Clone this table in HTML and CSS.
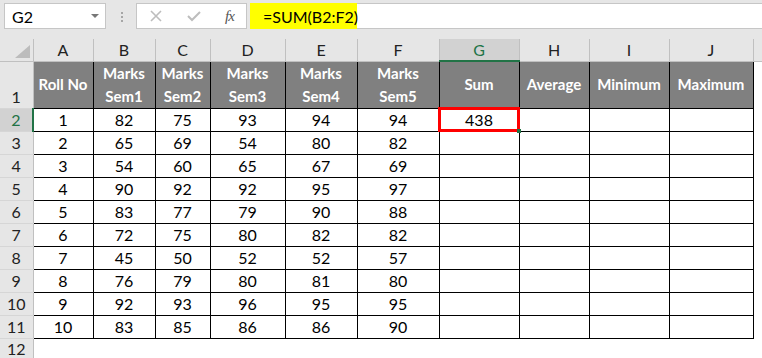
FILE: index.html
```html
<!DOCTYPE html>
<html lang="en">
<head>
  <meta charset="UTF-8">
  <title>Sum of marks</title>
  <link rel="stylesheet" href="styles.css">
</head>
<body>
  <div class="toolbar">
    <div class="name-box">
      <span>G2</span>
      <span class="caret"></span>
    </div>
    <div class="grip"><i></i><i></i><i></i></div>
    <div class="fx-buttons">
      <svg width="14" height="14" viewBox="0 0 14 14"><path d="M2 2 L12 12 M12 2 L2 12" stroke="#bdbdbd" stroke-width="1.6" fill="none"/></svg>
      <svg width="16" height="14" viewBox="0 0 16 14"><path d="M2 7 L6 11 L14 3" stroke="#bdbdbd" stroke-width="2" fill="none"/></svg>
      <span class="fx">fx</span>
    </div>
    <div class="formula">
      <span class="formula-text">=SUM(B2:F2)</span>
    </div>
  </div>

  <table class="sheet">
    <colgroup>
      <col style="width:33px">
      <col style="width:60px">
      <col style="width:62px">
      <col style="width:55px">
      <col style="width:75px">
      <col style="width:72px">
      <col style="width:82px">
      <col style="width:80px">
      <col style="width:70px">
      <col style="width:80px">
      <col style="width:84px">
      <col style="width:9px">
    </colgroup>
    <tr class="col-head">
      <th class="corner"><span class="tri"></span></th>
      <th>A</th><th>B</th><th>C</th><th>D</th><th>E</th><th>F</th>
      <th class="sel">G</th><th>H</th><th>I</th><th>J</th><th></th>
    </tr>
    <tr class="title-row">
      <th class="row-head">1</th>
      <td>Roll No</td>
      <td>Marks<br>Sem1</td>
      <td>Marks<br>Sem2</td>
      <td>Marks<br>Sem3</td>
      <td>Marks<br>Sem4</td>
      <td>Marks<br>Sem5</td>
      <td>Sum</td>
      <td>Average</td>
      <td>Minimum</td>
      <td>Maximum</td>
      <td class="blank"></td>
    </tr>
    <tr>
      <th class="row-head sel">2</th>
      <td>1</td><td>82</td><td>75</td><td>93</td><td>94</td><td>94</td>
      <td class="active">438</td><td></td><td></td><td></td><td class="blank"></td>
    </tr>
    <tr>
      <th class="row-head">3</th>
      <td>2</td><td>65</td><td>69</td><td>54</td><td>80</td><td>82</td>
      <td></td><td></td><td></td><td></td><td class="blank"></td>
    </tr>
    <tr>
      <th class="row-head">4</th>
      <td>3</td><td>54</td><td>60</td><td>65</td><td>67</td><td>69</td>
      <td></td><td></td><td></td><td></td><td class="blank"></td>
    </tr>
    <tr>
      <th class="row-head">5</th>
      <td>4</td><td>90</td><td>92</td><td>92</td><td>95</td><td>97</td>
      <td></td><td></td><td></td><td></td><td class="blank"></td>
    </tr>
    <tr>
      <th class="row-head">6</th>
      <td>5</td><td>83</td><td>77</td><td>79</td><td>90</td><td>88</td>
      <td></td><td></td><td></td><td></td><td class="blank"></td>
    </tr>
    <tr>
      <th class="row-head">7</th>
      <td>6</td><td>72</td><td>75</td><td>80</td><td>82</td><td>82</td>
      <td></td><td></td><td></td><td></td><td class="blank"></td>
    </tr>
    <tr>
      <th class="row-head">8</th>
      <td>7</td><td>45</td><td>50</td><td>52</td><td>52</td><td>57</td>
      <td></td><td></td><td></td><td></td><td class="blank"></td>
    </tr>
    <tr>
      <th class="row-head">9</th>
      <td>8</td><td>76</td><td>79</td><td>80</td><td>81</td><td>80</td>
      <td></td><td></td><td></td><td></td><td class="blank"></td>
    </tr>
    <tr>
      <th class="row-head">10</th>
      <td>9</td><td>92</td><td>93</td><td>96</td><td>95</td><td>95</td>
      <td></td><td></td><td></td><td></td><td class="blank"></td>
    </tr>
    <tr>
      <th class="row-head">11</th>
      <td>10</td><td>83</td><td>85</td><td>86</td><td>86</td><td>90</td>
      <td></td><td></td><td></td><td></td><td class="blank"></td>
    </tr>
    <tr class="empty-row">
      <th class="row-head">12</th>
      <td colspan="11" class="blank"></td>
    </tr>
  </table>
</body>
</html>
```

FILE: styles.css
```css
body {
  margin: 0;
  background-color: #e6e6e6;
  font-family: 'Lato', 'Liberation Sans', sans-serif;
  font-size: 16px;
  color: #000;
  overflow: hidden;
}

/* formula bar */

.toolbar {
  display: flex;
  align-items: flex-start;
  height: 39px;
  padding-top: 3px;
  box-sizing: border-box;
}

.name-box {
  display: flex;
  align-items: center;
  justify-content: space-between;
  width: 102px;
  height: 26px;
  margin-left: 4px;
  padding: 0 6px 0 7px;
  box-sizing: border-box;
  background-color: #fff;
  border: 1px solid #c6c6c6;
}

.caret {
  width: 0;
  height: 0;
  border-left: 4px solid transparent;
  border-right: 4px solid transparent;
  border-top: 4px solid #777;
}

.grip {
  display: flex;
  flex-direction: column;
  gap: 2px;
  margin: 9px 13px 0 15px;
}

.grip i {
  width: 2px;
  height: 2px;
  background-color: #a6a6a6;
}

.fx-buttons {
  display: flex;
  align-items: center;
  width: 111px;
  height: 26px;
  box-sizing: border-box;
  background-color: #fff;
  border: 1px solid #c6c6c6;
  padding-left: 12px;
}

.fx-buttons svg {
  margin-right: 23px;
}

.fx {
  font-family: 'Liberation Serif', serif;
  font-style: italic;
  font-size: 15px;
  color: #555;
  letter-spacing: -1px;
}

.formula {
  flex: 1;
  height: 26px;
  margin-left: 3px;
  box-sizing: border-box;
  background-color: #fff;
  border-top: 1px solid #c6c6c6;
  border-bottom: 1px solid #c6c6c6;
  display: flex;
}

.formula-text {
  display: flex;
  align-items: center;
  width: 107px;
  padding-left: 13px;
  box-sizing: border-box;
  background-color: #ffff00;
  margin-top: -1px;
  margin-bottom: -1px;
}

/* sheet */

.sheet {
  border-collapse: collapse;
  table-layout: fixed;
  width: 762px;
  background-color: #fff;
}

.sheet th,
.sheet td {
  padding: 0;
  text-align: center;
  font-weight: normal;
}

.col-head th {
  height: 21px;
  background-color: #e6e6e6;
  color: #222;
  border-left: 1px solid #c0c0c0;
  border-bottom: 1px solid #c0c0c0;
}

.col-head th.corner {
  position: relative;
  border-left: none;
}

.tri {
  position: absolute;
  right: 3px;
  bottom: 3px;
  width: 0;
  height: 0;
  border-left: 15px solid transparent;
  border-bottom: 13px solid #bcbcbc;
}

.col-head th.sel {
  background-color: #d2d2d2;
  color: #217346;
  border-bottom: 2px solid #217346;
}

.row-head {
  height: 22px;
  background-color: #e6e6e6;
  color: #222;
  border-right: 1px solid #c0c0c0;
  border-bottom: 1px solid #d6d6d6;
  line-height: 20px;
}

.row-head.sel {
  background-color: #d2d2d2;
  color: #217346;
  border-right: 2px solid #217346;
}

.sheet td {
  border: 1px solid #000;
  height: 21px;
  vertical-align: middle;
  line-height: 20px;
}

.title-row th {
  height: 44px;
  vertical-align: bottom;
  line-height: 22px;
}

.title-row td {
  background-color: #808080;
  color: #fff;
  font-weight: bold;
  font-size: 15px;
  line-height: 23px;
}

.sheet td.blank {
  border: none;
  background-color: #fff;
}

.empty-row th {
  height: 21px;
}

.sheet td.active {
  position: relative;
  outline: 3px solid #ff0000;
  outline-offset: -2px;
}

.sheet td.active::after {
  content: "";
  position: absolute;
  right: -2px;
  bottom: -2px;
  width: 4px;
  height: 4px;
  background-color: #217346;
}
```
